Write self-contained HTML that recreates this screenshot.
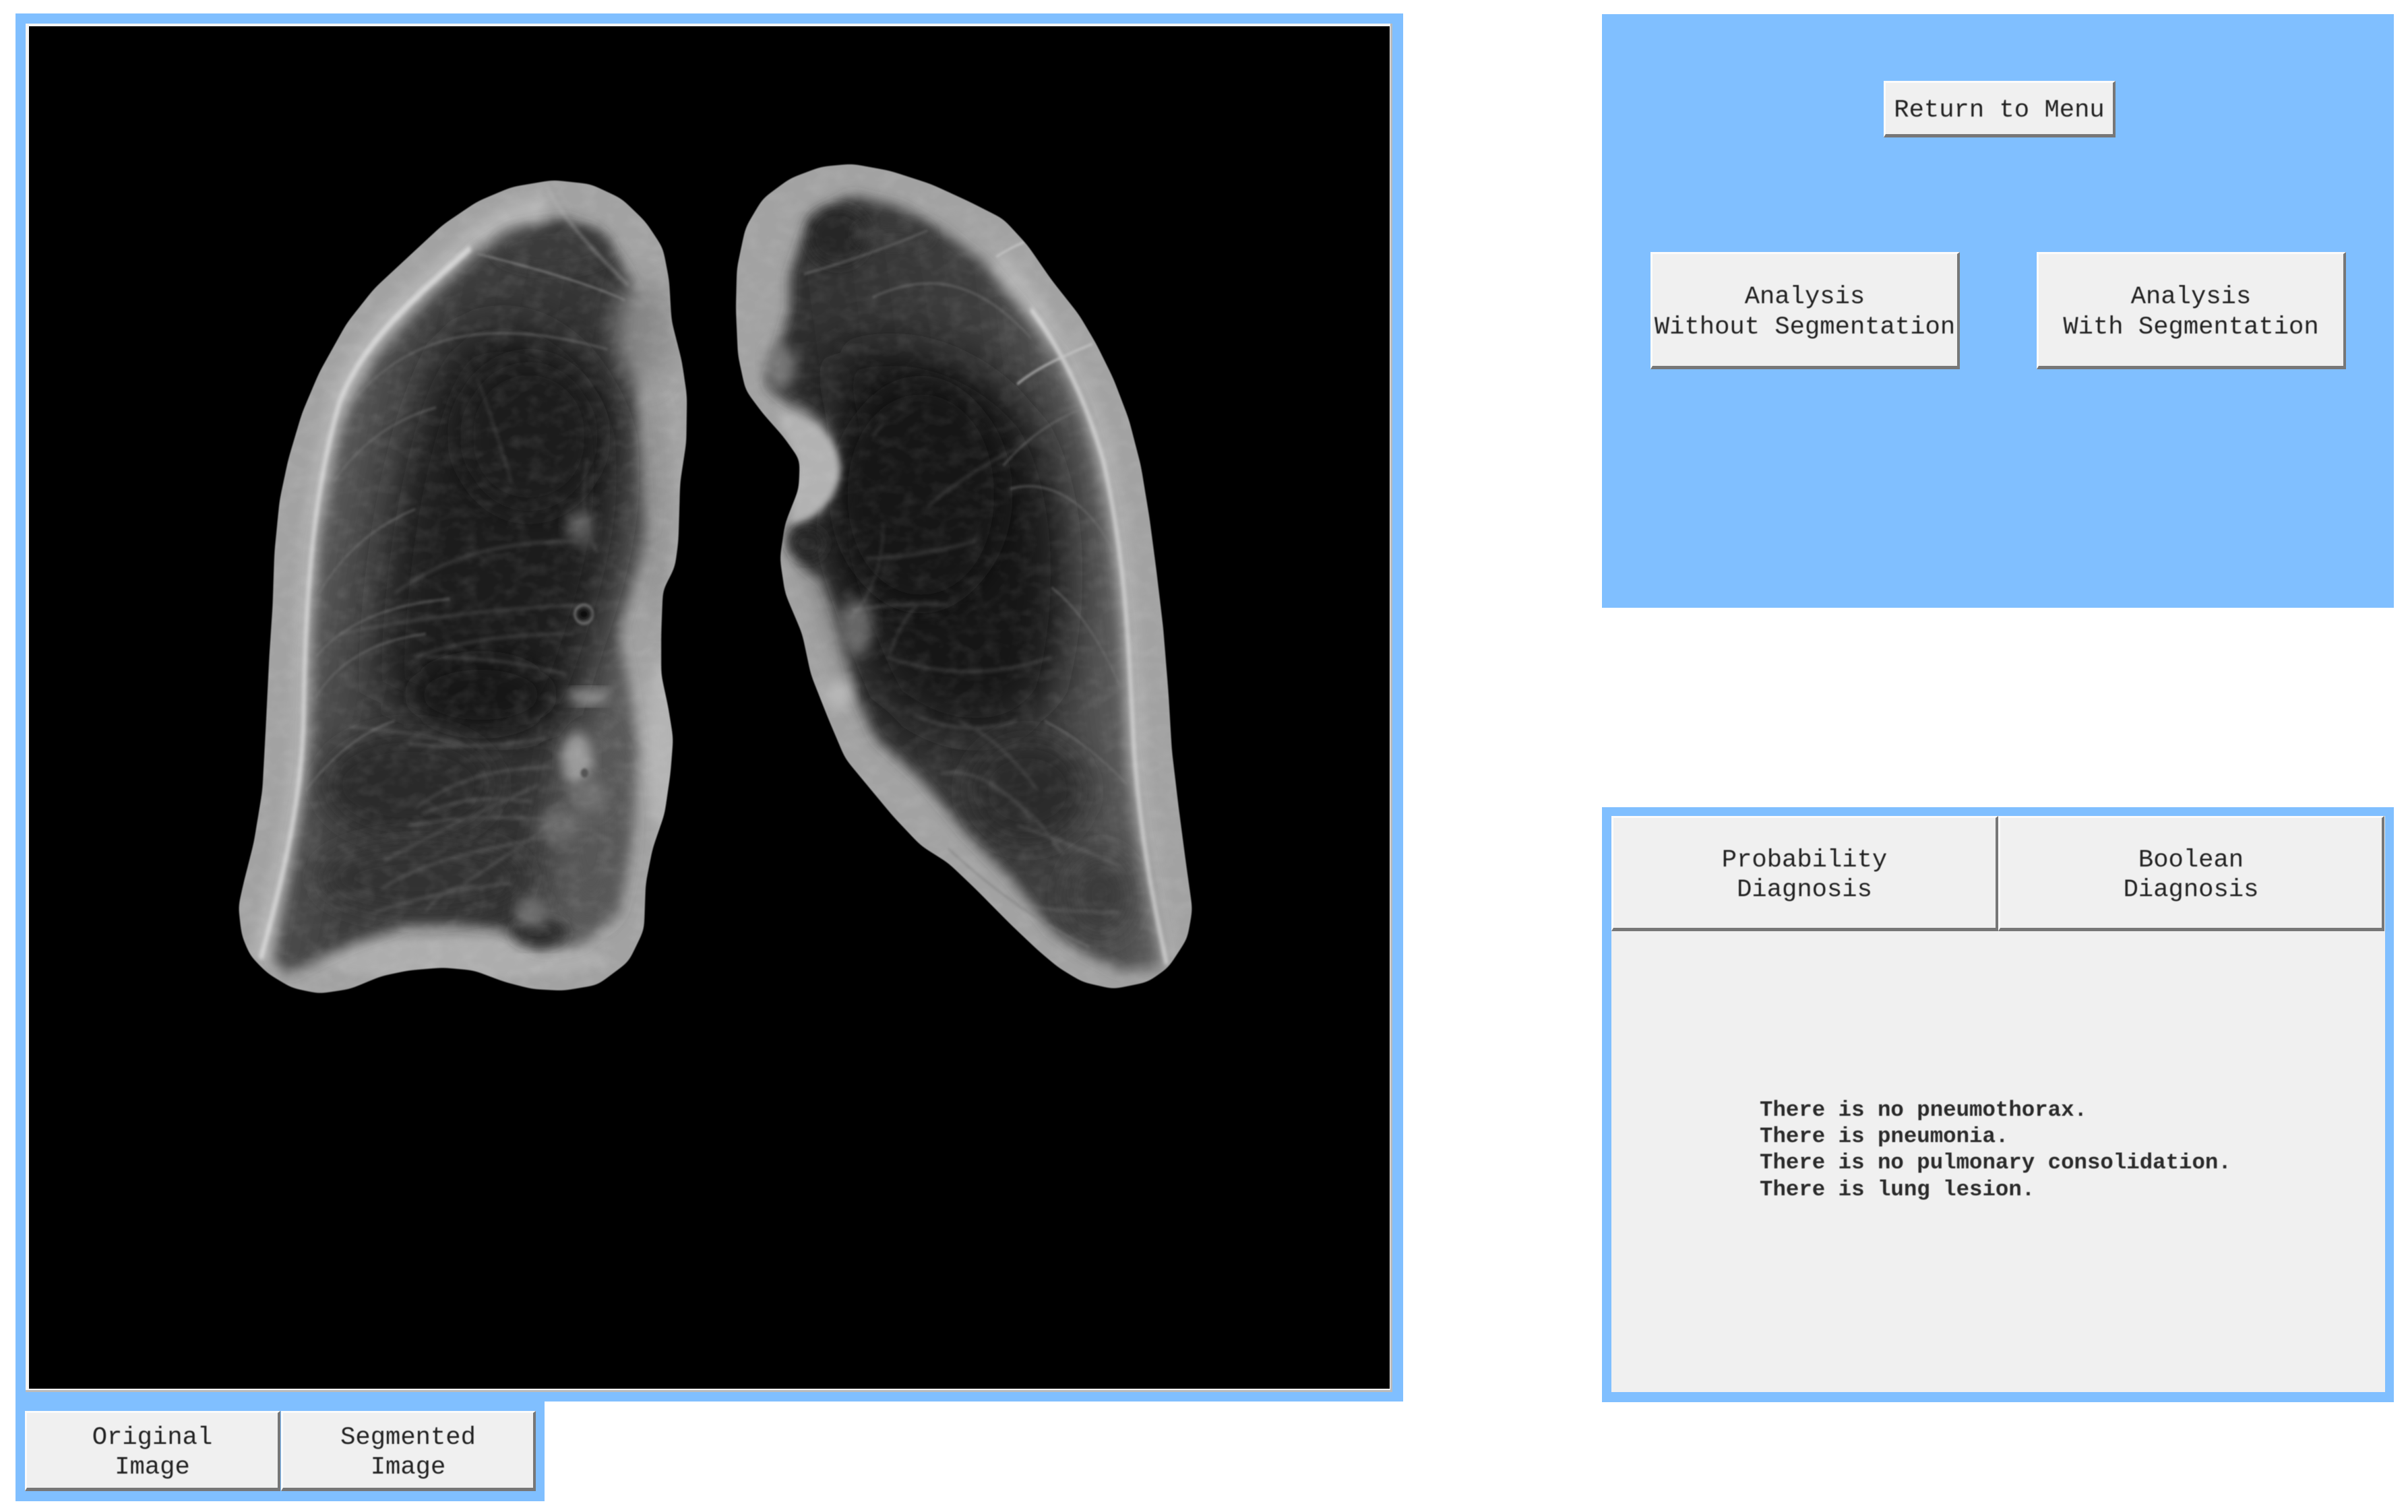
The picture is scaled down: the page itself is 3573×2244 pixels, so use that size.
<!DOCTYPE html>
<html lang="en">
<head>
<meta charset="utf-8">
<title>Lung Analysis</title>
<style>
html,body{margin:0;padding:0;background:#fff;}
body{width:3573px;height:2244px;position:relative;overflow:hidden;font-family:"Liberation Mono","DejaVu Sans Mono",monospace;color:#222;}
.a{position:absolute;box-sizing:border-box;}
.blue{background:#80bfff;}
.btn{background:#f0f0f0;border-style:solid;border-width:3px 4px 5px 3px;border-color:#fbfbfb #777 #777 #fbfbfb;display:flex;align-items:center;justify-content:center;text-align:center;font-size:37.2px;line-height:44.5px;white-space:pre;padding-top:7px;}
.btn span,.diag{filter:blur(.6px);}
.diag{position:absolute;left:2611px;top:1628px;font-size:32.4px;line-height:39.2px;white-space:pre;font-weight:bold;color:#2a2a2a;}
svg{position:absolute;left:0;top:0;}
</style>
</head>
<body>
<!-- image panel -->
<div class="a blue" style="left:23px;top:20px;width:2059px;height:2060px;"></div>
<div class="a" style="left:38px;top:35px;width:2028px;height:2031px;background:#f4f4f4;border-right:3px solid #bbb;border-bottom:3px solid #bbb;"></div>
<div class="a" style="left:43px;top:39px;width:2019px;height:2022px;background:#000;"></div>

<svg width="3573" height="2244" viewBox="0 0 3573 2244" xmlns="http://www.w3.org/2000/svg">
<defs>
<linearGradient id="gl" gradientUnits="userSpaceOnUse" x1="330" y1="500" x2="1250" y2="800">
<stop offset="0" stop-color="#5e5e5e"/><stop offset=".35" stop-color="#3e3e3e"/><stop offset=".8" stop-color="#323232"/><stop offset="1" stop-color="#5a5a5a"/>
</linearGradient>
<linearGradient id="gr" gradientUnits="userSpaceOnUse" x1="1180" y1="600" x2="300" y2="800">
<stop offset="0" stop-color="#626262"/><stop offset=".35" stop-color="#3e3e3e"/><stop offset="1" stop-color="#2c2c2c"/>
</linearGradient>
<filter id="b3" x="-20%" y="-20%" width="140%" height="140%"><feGaussianBlur stdDeviation="3 1.8"/></filter>
<filter id="b5" x="-20%" y="-20%" width="140%" height="140%"><feGaussianBlur stdDeviation="5 3"/></filter>
<filter id="b8" x="-30%" y="-30%" width="160%" height="160%"><feGaussianBlur stdDeviation="10 6"/></filter>
<filter id="b14" x="-30%" y="-30%" width="160%" height="160%"><feGaussianBlur stdDeviation="18 11"/></filter>
<filter id="b20" x="-60%" y="-60%" width="220%" height="220%"><feGaussianBlur stdDeviation="40 24"/></filter>
<filter id="b50" x="-80%" y="-80%" width="260%" height="260%"><feGaussianBlur stdDeviation="70 42"/></filter>
<filter id="noise" x="0" y="0" width="100%" height="100%">
<feTurbulence type="fractalNoise" baseFrequency="0.02 0.05" numOctaves="3" seed="4"/>
<feGaussianBlur stdDeviation="2.5 1.5"/>
<feColorMatrix type="matrix" values="0 0 0 0 1  0 0 0 0 1  0 0 0 0 1  1.8 0 0 0 -0.75"/>
</filter>
<filter id="smooth" x="-10%" y="-10%" width="120%" height="120%">
<feGaussianBlur stdDeviation="16 10"/>
<feComponentTransfer><feFuncA type="linear" slope="9" intercept="-4"/></feComponentTransfer>
</filter>
<mask id="ml" maskUnits="userSpaceOnUse" x="0" y="0" width="1568" height="1568"><path fill="#fff" filter="url(#smooth)" d="M1020,78 1130,85 1220,110 1290,150 1340,195 1358,250 1365,320 1395,390 1410,450 1408,530 1390,600 1385,700 1375,745 1340,785 1335,860 1335,930 1355,985 1370,1040 1362,1100 1345,1170 1310,1230 1290,1290 1285,1370 1240,1425 1150,1465 1050,1475 960,1472 880,1460 790,1440 700,1435 600,1440 520,1450 430,1472 340,1480 260,1470 190,1445 140,1415 115,1380 105,1330 120,1290 150,1220 175,1130 185,1020 195,900 205,810 210,720 225,630 250,560 290,480 340,410 420,325 500,265 600,210 700,155 800,115 900,90Z"/></mask>
<mask id="mr" maskUnits="userSpaceOnUse" x="0" y="0" width="1568" height="1568"><path fill="#fff" filter="url(#smooth)" d="M420,50 530,62 650,85 760,115 860,145 930,190 1000,250 1080,310 1130,360 1180,420 1225,490 1260,570 1285,660 1305,750 1325,850 1340,960 1350,1060 1370,1160 1390,1250 1410,1335 1395,1385 1340,1435 1280,1460 1180,1472 1090,1460 1020,1435 960,1405 880,1360 780,1300 700,1255 620,1225 540,1175 470,1125 400,1075 350,1005 300,930 275,860 225,790 210,730 225,670 265,610 268,560 220,520 160,480 110,440 88,380 82,300 85,230 110,160 160,110 240,75 330,55Z"/></mask>
</defs>

<!-- left lung -->
<g transform="translate(300,200) scale(.5102,.8613)">
<g mask="url(#ml)">
<rect x="0" y="0" width="1568" height="1568" fill="#a2a2a2"/>
<ellipse cx="750" cy="1420" rx="420" ry="35" fill="#adadad" filter="url(#b8)"/>
<ellipse cx="1340" cy="1050" rx="50" ry="150" fill="#b4b4b4" filter="url(#b14)"/>
<ellipse cx="1320" cy="650" rx="40" ry="200" fill="#989898" filter="url(#b14)"/>
<path d="M205,1420 300,1100 310,900 330,700 400,500 500,380 640,285 800,195 900,160 1050,145 1150,165 1230,230 1290,310 1260,400 1270,550 1290,700 1210,850 1240,950 1265,1050 1250,1200 1210,1340 1100,1395 980,1405 880,1370 750,1360 600,1360 450,1390 250,1445Z" fill="url(#gl)" filter="url(#b14)"/>
<ellipse cx="1280" cy="340" rx="80" ry="90" fill="#888" filter="url(#b20)"/>
<ellipse cx="1020" cy="195" rx="170" ry="36" fill="#3a3a3a" filter="url(#b14)"/>
<path d="M720,360 C880,290 1130,340 1200,520 C1230,700 1130,830 1040,1000 C860,1050 680,1010 520,960 C520,800 570,520 720,360Z" fill="#1a1a1a" filter="url(#b50)"/>
<ellipse cx="950" cy="520" rx="200" ry="130" fill="#1c1c1c" filter="url(#b20)"/>
<ellipse cx="810" cy="965" rx="200" ry="60" fill="#161616" filter="url(#b20)"/>
<ellipse cx="600" cy="1120" rx="250" ry="90" fill="#2c2c2c" filter="url(#b20)"/>
<ellipse cx="640" cy="1280" rx="300" ry="60" fill="#333" filter="url(#b20)"/>
<ellipse cx="1130" cy="1190" rx="80" ry="160" fill="#565656" filter="url(#b20)"/>
<ellipse cx="980" cy="1375" rx="80" ry="22" fill="#2c2c2c" filter="url(#b14)"/>
<!-- rib arcs -->
<g fill="none" stroke="#777" stroke-width="5" opacity=".4" filter="url(#b3)">
<path d="M420,470 C560,370 760,300 1180,370"/>
<path d="M380,600 C460,530 560,490 680,470"/>
<path d="M340,790 C420,710 520,670 620,645"/>
<path d="M330,900 C400,850 520,810 720,800"/>
<path d="M330,970 C400,900 520,870 650,860"/>
<path d="M300,1130 C380,1070 460,1030 560,1010"/>
</g>
<!-- vessels -->
<g fill="none" stroke="#9a9a9a" stroke-width="5" opacity=".26" filter="url(#b5)">
<path d="M620,1160 C760,1100 900,1090 1020,1090"/>
<path d="M560,790 C720,720 900,700 1090,700"/>
<path d="M520,1300 C640,1250 830,1230 1000,1210"/>
<path d="M640,1170 C760,1140 860,1140 960,1150"/>
<path d="M800,420 Q850,500 900,600"/>
<path d="M430,1020 Q620,1030 760,1050"/>
<path d="M400,860 Q720,820 1100,810"/>
<path d="M650,900 Q880,900 1060,930"/>
<path d="M760,1290 Q900,1240 1050,1170"/>
<path d="M1120,560 Q1090,660 1150,720"/>
<path d="M530,1250 Q720,1190 980,1120"/>
<path d="M650,1340 Q720,1280 820,1300"/>
<path d="M600,1190 Q800,1170 1000,1180"/>
<path d="M500,1340 Q700,1300 900,1290"/>
<path d="M600,1050 Q800,1060 1000,1040"/>
<path d="M620,900 Q800,860 1080,860"/>
</g>
<!-- hilum bright -->
<ellipse cx="1090" cy="1075" rx="45" ry="45" fill="#9c9c9c" filter="url(#b14)"/>
<ellipse cx="1125" cy="968" rx="60" ry="12" fill="#989898" filter="url(#b14)"/>
<ellipse cx="1100" cy="675" rx="40" ry="30" fill="#5c5c5c" filter="url(#b14)"/>
<ellipse cx="1040" cy="1190" rx="60" ry="30" fill="#6a6a6a" filter="url(#b14)"/>
<ellipse cx="960" cy="1340" rx="45" ry="26" fill="#6e6e6e" filter="url(#b14)"/>
<ellipse cx="1130" cy="1140" rx="50" ry="30" fill="#707070" filter="url(#b14)"/>
<ellipse cx="1110" cy="826" rx="26" ry="16" fill="none" stroke="#606060" stroke-width="6" filter="url(#b3)"/>
<ellipse cx="1110" cy="826" rx="13" ry="7" fill="#0c0c0c" filter="url(#b3)"/>
<ellipse cx="1112" cy="1100" rx="11" ry="8" fill="#555" filter="url(#b3)"/>
<!-- bright rib line -->
<path d="M170,1420 C230,1290 290,1150 295,1000 C300,800 320,620 400,460 C470,350 640,270 780,195 C850,160 920,140 1000,130" fill="none" stroke="#fff" stroke-width="55" opacity=".2" filter="url(#b14)"/>
<path d="M170,1420 C230,1290 290,1150 295,1000 C300,800 320,620 400,460 C470,350 640,270 780,195" fill="none" stroke="#e0e0e0" stroke-width="12" opacity=".8" filter="url(#b5)"/>
<path d="M1000,85 C1030,130 1120,190 1240,260" fill="none" stroke="#bbb" stroke-width="5" opacity=".5" filter="url(#b5)"/>
<path d="M800,205 C900,220 1100,250 1230,285" fill="none" stroke="#888" stroke-width="4" opacity=".6" filter="url(#b3)"/>
<rect x="0" y="0" width="1568" height="1568" filter="url(#noise)" opacity=".1"/>
</g>
</g>

<!-- right lung -->
<g transform="translate(1050,200) scale(.5102,.8613)">
<g mask="url(#mr)">
<rect x="0" y="0" width="1568" height="1568" fill="#a2a2a2"/>
<path d="M240,240 300,140 420,105 560,125 680,165 800,220 900,290 1030,385 1100,480 1170,640 1215,860 1225,1050 1260,1200 1335,1435 1200,1440 1100,1410 1000,1370 880,1280 750,1200 620,1110 490,1040 430,960 390,850 340,770 270,740 235,700 240,675 330,650 395,570 350,500 280,470 230,460 170,430 200,380 240,300Z" fill="url(#gr)" filter="url(#b14)"/>
<ellipse cx="380" cy="175" rx="90" ry="50" fill="#282828" filter="url(#b14)"/>
<ellipse cx="540" cy="172" rx="110" ry="22" fill="#3a3a3a" filter="url(#b14)"/>
<ellipse cx="210" cy="400" rx="45" ry="40" fill="#777" filter="url(#b14)"/>
<path d="M340,400 C520,330 800,380 950,500 C1060,620 1070,800 1000,960 C900,1060 700,1060 520,970 C440,860 380,770 350,680 C400,600 430,500 340,400Z" fill="#181818" filter="url(#b50)"/>
<ellipse cx="620" cy="620" rx="240" ry="190" fill="#181818" filter="url(#b20)"/>
<ellipse cx="930" cy="1130" rx="170" ry="90" fill="#292929" filter="url(#b20)"/>
<ellipse cx="1140" cy="1310" rx="90" ry="70" fill="#3a3a3a" filter="url(#b20)"/>
<ellipse cx="290" cy="705" rx="50" ry="26" fill="#262626" filter="url(#b14)"/>
<ellipse cx="430" cy="850" rx="50" ry="50" fill="#666" filter="url(#b14)"/>
<!-- shoulder -->
<path d="M200,480 C300,480 380,520 385,575 C385,620 330,660 240,670 L250,620 L260,560Z" fill="#b2b2b2" filter="url(#b8)"/>
<!-- rib arcs -->
<g fill="none" stroke="#787878" stroke-width="5" opacity=".4" filter="url(#b3)">
<path d="M280,240 Q460,210 640,165"/>
<path d="M480,280 C660,230 800,260 940,350"/>
<path d="M860,570 Q960,500 1100,470"/>
<path d="M880,610 C1000,590 1120,640 1180,720"/>
<path d="M1000,780 Q1110,830 1200,950"/>
<path d="M980,1010 Q1110,1050 1220,1120"/>
<path d="M700,1230 Q900,1340 1110,1400"/>
</g>
<!-- vessels -->
<g fill="none" stroke="#9a9a9a" stroke-width="5" opacity=".25" filter="url(#b5)">
<path d="M480,520 Q495,505 510,500"/>
<path d="M510,670 Q510,770 420,830"/>
<path d="M460,730 Q600,730 780,700"/>
<path d="M530,895 Q560,840 610,810"/>
<path d="M420,820 Q560,805 700,810"/>
<path d="M520,900 Q760,950 1000,900"/>
<path d="M680,1100 Q820,1090 940,1180"/>
<path d="M820,1120 Q950,1160 1030,1240"/>
<path d="M730,1010 Q850,1040 960,1130"/>
<path d="M850,1320 Q1000,1340 1200,1340"/>
<path d="M640,640 Q760,580 900,540"/>
<path d="M900,1190 Q1050,1220 1200,1260"/>
<path d="M600,1000 Q760,1040 900,1010"/>
</g>
<!-- bright rib line -->
<path d="M840,215 C960,300 1090,420 1150,560 C1220,740 1225,900 1240,1060 C1260,1220 1300,1330 1335,1430" fill="none" stroke="#fff" stroke-width="55" opacity=".18" filter="url(#b14)"/>
<path d="M940,300 C1040,380 1100,460 1150,560 C1220,740 1225,900 1240,1060 C1260,1220 1300,1330 1335,1430" fill="none" stroke="#e0e0e0" stroke-width="10" opacity=".8" filter="url(#b5)"/>
<path d="M840,210 Q880,195 920,185" fill="none" stroke="#ccc" stroke-width="4" opacity=".7" filter="url(#b3)"/>
<path d="M900,430 C960,400 1040,380 1120,360" fill="none" stroke="#c8c8c8" stroke-width="5" opacity=".65" filter="url(#b3)"/>
<ellipse cx="380" cy="965" rx="40" ry="25" fill="#b8b8b8" filter="url(#b14)"/>
<rect x="0" y="0" width="1568" height="1568" filter="url(#noise)" opacity=".09"/>
</g>
</g>
</svg>

<!-- image toggle bar -->
<div class="a blue" style="left:23px;top:2080px;width:785px;height:148px;"></div>
<div class="a btn" style="left:37px;top:2094px;width:379px;height:119px;"><span>Original
Image</span></div>
<div class="a btn" style="left:417px;top:2094px;width:378px;height:119px;"><span>Segmented
Image</span></div>

<!-- analysis panel -->
<div class="a blue" style="left:2377px;top:21px;width:1175px;height:881px;"></div>
<div class="a btn" style="left:2795px;top:120px;width:344px;height:84px;"><span>Return to Menu</span></div>
<div class="a btn" style="left:2449px;top:374px;width:459px;height:174px;"><span>Analysis
Without Segmentation</span></div>
<div class="a btn" style="left:3022px;top:374px;width:459px;height:174px;"><span>Analysis
With Segmentation</span></div>

<!-- diagnosis panel -->
<div class="a blue" style="left:2377px;top:1198px;width:1175px;height:883px;"></div>
<div class="a" style="left:2391px;top:1211px;width:1148px;height:855px;background:#f0f0f0;"></div>
<div class="a btn" style="left:2391px;top:1211px;width:574px;height:171px;"><span>Probability
Diagnosis</span></div>
<div class="a btn" style="left:2965px;top:1211px;width:573px;height:171px;"><span>Boolean
Diagnosis</span></div>
<div class="diag">There is no pneumothorax.
There is pneumonia.
There is no pulmonary consolidation.
There is lung lesion.</div>
</body>
</html>
